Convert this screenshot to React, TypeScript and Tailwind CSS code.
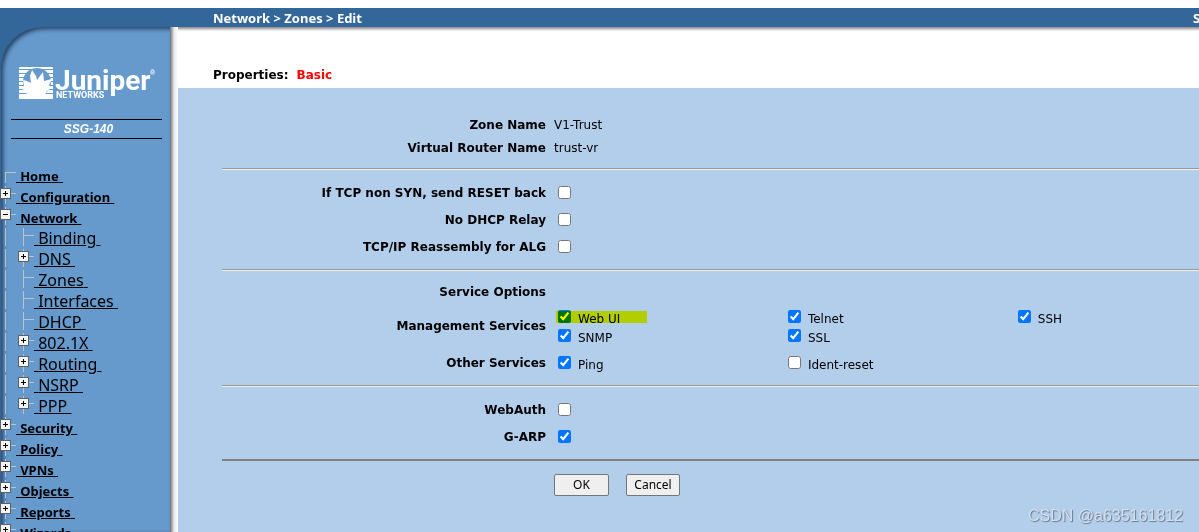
import type { ReactNode } from "react";

type NavItem = { label: string; level: 1 | 2; toggle?: "+" | "-" };

const NAV: NavItem[] = [
  { label: "Home", level: 1 },
  { label: "Configuration", level: 1, toggle: "+" },
  { label: "Network", level: 1, toggle: "-" },
  { label: "Binding", level: 2 },
  { label: "DNS", level: 2, toggle: "+" },
  { label: "Zones", level: 2 },
  { label: "Interfaces", level: 2 },
  { label: "DHCP", level: 2 },
  { label: "802.1X", level: 2, toggle: "+" },
  { label: "Routing", level: 2, toggle: "+" },
  { label: "NSRP", level: 2, toggle: "+" },
  { label: "PPP", level: 2, toggle: "+" },
  { label: "Security", level: 1, toggle: "+" },
  { label: "Policy", level: 1, toggle: "+" },
  { label: "VPNs", level: 1, toggle: "+" },
  { label: "Objects", level: 1, toggle: "+" },
  { label: "Reports", level: 1, toggle: "+" },
  { label: "Wizards", level: 1, toggle: "+" },
];

export default function App() {
  return (
    <div className="flex h-screen flex-col overflow-hidden bg-white font-['Noto_Sans',sans-serif] text-black">
      <header className="mt-2 flex h-[19px] shrink-0 items-center justify-between bg-[#336699] pl-[213px] text-[13px] leading-4 font-bold text-white">
        <nav>Network &gt; Zones &gt; Edit</nav>
        <span className="w-1.5">S</span>
      </header>
      <div className="flex min-h-0 flex-1">
        <Sidebar />
        <main className="flex min-w-0 flex-1 flex-col">
          <div className="h-1 shrink-0 bg-linear-to-b from-[#85888c] to-white" />
          <h1 className="flex h-[57px] shrink-0 items-end gap-2 pb-[5px] pl-[35px] font-['DejaVu_Sans',sans-serif] text-xs font-bold">
            <span>Properties:</span>
            <span className="text-[#ff0000]">Basic</span>
          </h1>
          <ZoneForm />
        </main>
      </div>
      <p className="absolute right-4 bottom-1 font-['Liberation_Sans',sans-serif] text-base text-[#d3dfec] [text-shadow:1px_1px_1px_#66788c]">
        CSDN @a635161812
      </p>
    </div>
  );
}

function Sidebar() {
  return (
    <aside className="w-[178px] shrink-0 bg-linear-to-r from-[#336699] from-50% to-white to-50%">
      <div className="flex h-full">
        <div className="flex w-[170px] flex-col overflow-hidden rounded-tl-[42px] bg-[#6699cc] shadow-[inset_1px_0_0_#336699,inset_3px_2px_4px_#23405f]">
          <Logo />
          <p className="mr-2 ml-[11px] mt-5 h-5 border-y border-black pl-1 text-center font-['Liberation_Sans',sans-serif] text-xs leading-[18px] font-bold text-white italic">
            SSG-140
          </p>
          <ul className="mt-[26px]">
            {NAV.map((item) => <NavRow key={item.label} item={item} />)}
          </ul>
        </div>
        <div className="w-2 bg-linear-to-r from-[#6b7078] via-[#e8e8e8] to-white" />
      </div>
    </aside>
  );
}

function NavRow({ item }: { item: NavItem }) {
  const nested = item.level === 2;
  return (
    <li className="flex h-[21px]">
      {nested && <TreeMark x={5} line />}
      <TreeMark x={5} toggle={item.toggle} first={item.label === "Home"} line branch />
      <a href="#" className="text-base leading-[21px] whitespace-pre underline">
        {" "}
        {nested ? item.label : <b className="text-[13px]">{item.label}</b>}
        {" "}
      </a>
    </li>
  );
}

type MarkProps = { x: number; toggle?: "+" | "-"; first?: boolean; line?: boolean; branch?: boolean };

function TreeMark({ x, toggle, first, line, branch }: MarkProps) {
  return (
    <svg width={branch ? 16 : 18} height="21" className="shrink-0" shapeRendering="crispEdges">
      {line && <path d={`M${x + 0.5} ${first ? 7 : 0}V18`} stroke="#b8c4d0" />}
      {branch && <path d={`M${x} 7.5H16`} stroke="#b8c4d0" />}
      {toggle && (
        <g>
          <rect x="0.5" y="2.5" width="10" height="10" fill="#f4f4f4" stroke="#5f6062" />
          <path d="M3 7.5H8" stroke="#000" />
          {toggle === "+" && <path d="M5.5 5V10" stroke="#000" />}
        </g>
      )}
    </svg>
  );
}

function Logo() {
  return (
    <svg viewBox="0 0 140 36" width="140" height="36" className="mt-9 ml-[18px] shrink-0" role="img" aria-label="Juniper Networks">
      <rect x="1" y="4" width="34" height="32" rx="1" fill="#fff" />
      <path d="M1 6.5H35M1 10.5H35M1 14.5H35M1 18.5H35M1 22.5H35M1 26.5H35M1 30.5H35" stroke="#6699cc" />
      <circle cx="19" cy="19" r="14" fill="#6699cc" />
      <path d="M10 35L8 29L3 25L6 23L5 17L9 18L13 20L12 13L14 7L18 13L19 17L25 9L26 18L34 16L31 22L33 25L28 29L27 35Z" fill="#fff" />
      <g fill="#fff" fontWeight="700">
        <text x="37" y="27" fontSize="28" fontFamily="Liberation Sans Narrow, Roboto, sans-serif">Juniper</text>
        <text x="38" y="35" fontSize="9" fontFamily="Roboto, sans-serif">NETWORKS</text>
        <text x="132" y="12" fontSize="7" fontFamily="Liberation Sans, sans-serif">®</text>
      </g>
    </svg>
  );
}

function ZoneForm() {
  return (
    <form className="flex-1 bg-[#b3ceeb] pt-[25px] pl-11 font-['DejaVu_Sans',sans-serif] text-xs">
      <Row label="Zone Name" height="h-[23px]">V1-Trust</Row>
      <Row label="Virtual Router Name" height="h-[23px]">trust-vr</Row>
      <Divider />
      <Row label="If TCP non SYN, send RESET back" id="reset"><Check id="reset" /></Row>
      <Row label="No DHCP Relay" id="relay"><Check id="relay" /></Row>
      <Row label="TCP/IP Reassembly for ALG" id="alg"><Check id="alg" /></Row>
      <Divider />
      <Row label="Service Options" height="h-[23px]" />
      <Row label="Management Services" height="mt-1 h-[38px]">
        <Options>
          <Option label="Web UI" checked marked />
          <Option label="Telnet" checked />
          <Option label="SSH" checked />
          <Option label="SNMP" checked />
          <Option label="SSL" checked />
        </Options>
      </Row>
      <Row label="Other Services" height="mt-[7px] mb-3 h-[21px]">
        <Options>
          <Option label="Ping" checked />
          <Option label="Ident-reset" />
        </Options>
      </Row>
      <Divider />
      <Row label="WebAuth" id="webauth"><Check id="webauth" /></Row>
      <Row label="G-ARP" id="garp"><Check id="garp" checked /></Row>
      <hr className="mt-[9px] border-t-2 border-[#808080]" />
      <div className="mt-[13px] ml-[332px] flex gap-[17px] font-['Noto_Sans',sans-serif]">
        <button type="button" className="h-[22px] w-[55px] rounded-xs border border-[#767676] bg-[#efefef]">OK</button>
        <button type="button" className="h-[22px] w-[54px] rounded-xs border border-[#767676] bg-[#efefef]">Cancel</button>
      </div>
    </form>
  );
}

type RowProps = { label: string; id?: string; height?: string; children?: ReactNode };

function Row({ label, id, height = "h-[27px]", children }: RowProps) {
  return (
    <div className={`flex items-center gap-2 ${height}`}>
      <div className="w-[324px] shrink-0 text-right font-bold">
        {id ? <label htmlFor={id}>{label}</label> : label}
      </div>
      <div className="min-w-0 flex-1">{children}</div>
    </div>
  );
}

function Divider() {
  return <hr className="my-[9px] h-0.5 border-t border-b border-t-[#9a9a9a] border-b-[#eeeeee]" />;
}

function Check({ id, checked }: { id?: string; checked?: boolean }) {
  return <input id={id} type="checkbox" defaultChecked={checked} className="mx-1 block size-[13px]" />;
}

function Options({ children }: { children: ReactNode }) {
  return <div className="grid grid-cols-[36fr_36fr_29fr]">{children}</div>;
}

function Option({ label, checked, marked }: { label: string; checked?: boolean; marked?: boolean }) {
  return (
    <label className="relative flex h-[19px] items-center gap-[3px]">
      <Check checked={checked} />
      <span className="pt-1">{label}</span>
      {marked && <span className="absolute top-1 left-0.5 h-3 w-[91px] bg-[#ffff00] mix-blend-multiply" />}
    </label>
  );
}
